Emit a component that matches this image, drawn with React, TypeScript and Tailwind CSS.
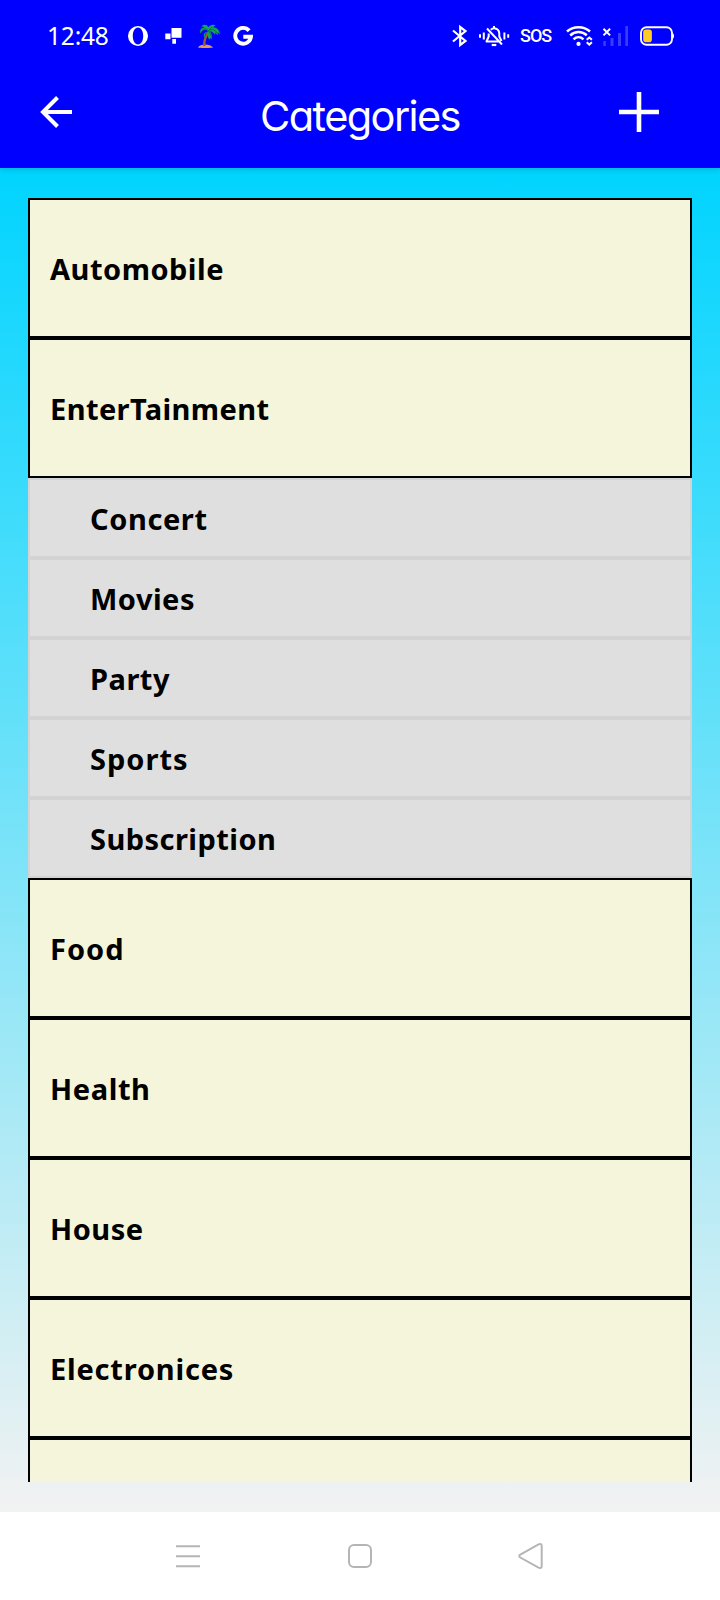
import React from "react";

type Row = { label: string; spacing: string };

const top: Row[] = [
  { label: "Automobile", spacing: "tracking-[0.5px]" },
  { label: "EnterTainment", spacing: "tracking-[0.4px]" },
];
const subs: Row[] = [
  { label: "Concert", spacing: "tracking-[0.6px]" },
  { label: "Movies", spacing: "tracking-[0.5px]" },
  { label: "Party", spacing: "tracking-[0.5px]" },
  { label: "Sports", spacing: "tracking-[1px]" },
  { label: "Subscription", spacing: "tracking-[0.45px]" },
];
const rest: Row[] = [
  { label: "Food", spacing: "tracking-[1px]" },
  { label: "Health", spacing: "tracking-[0.6px]" },
  { label: "House", spacing: "tracking-[0.5px]" },
  { label: "Electronices", spacing: "tracking-[0.8px]" },
  { label: "", spacing: "tracking-[0px]" },
];

function Category({ label, spacing }: Row) {
  return (
    <div className="flex h-[140px] shrink-0 items-center border-2 border-black bg-[#f5f5dc] pt-0.5 pl-5">
      <span className={`text-[29px] leading-10 font-bold text-black ${spacing}`}>{label}</span>
    </div>
  );
}

function SubCategory({ label, spacing }: Row) {
  return (
    <div className="flex h-20 shrink-0 items-center border-2 border-[#d3d3d3] bg-[#dfdfdf] pt-0.5 pl-[60px]">
      <span className={`text-[29px] leading-10 font-bold text-black ${spacing}`}>{label}</span>
    </div>
  );
}

function StatusBar() {
  return (
    <div className="flex h-6 items-center pr-[44px] pl-[47px] text-white">
      <span className="w-[81px] font-['Noto_Sans'] text-[24.5px] leading-6 tracking-[-0.2px]">12:48</span>
      <svg className="h-6 w-5" viewBox="128 24 20 24">
        <path fill="#fff" fillRule="evenodd" d="M138 26a10 10 0 1 0 0 20a10 10 0 1 0 0-20ZM138 27.600c3.200 0 5.200 3.700 5.200 8.400s-2 8.400-5.200 8.400s-5.200-3.700-5.200-8.400s2-8.400 5.200-8.400Z" />
      </svg>
      <svg className="ml-[17px] h-6 w-[17px]" viewBox="165 24 17 24" fill="#fff">
        <path d="M171.500 28h10v9.700h-10zM165.300 33.600h5.200v5.600h-5.200zM172.300 39h3.700v4.800h-3.700z" />
      </svg>
      <svg className="ml-4 h-6 w-[22px]" viewBox="198 24 22 24">
        <path fill="#e39a52" d="M198 47.500c1.500-4 12.500-4 15 0c-3 .7-12 .7-15 0Z" />
        <path fill="none" stroke="#9a593e" strokeWidth="2.400" d="M204.200 46c0-5 1.200-10 4.500-14" />
        <path fill="#12a35a" d="M208.500 31.500c-3-3-6.500-2-8.200 2.200c-.8-4 1-6.400 4.200-6.300c-.9-.9-2-1.100-3.100-.9c2.200-2.500 5.400-2 7 .7c1.600-2.300 5-3.600 7.400-1.200c-1.200 0-2 .4-2.600 1.200c3.600 0 6.400 2.900 6.700 7.300l-2.300-2.300l.1 3.200l-2.500-2.900l.1 2.600c-1.600-2-3.600-3.800-5.600-4c1.700 2.200 3 5 1.500 8.300l-1-1.700l-1 2c-1.600-2.600-1.900-5.300-.7-8.200c-2.400.7-3.800 2.600-3.900 6c-2.200-2.700-.3-5.600 3.900-6Z" />
        <path fill="none" stroke="#0a743f" strokeWidth=".9" d="M202 29.500c3-1.500 5-.5 6.500 1.500c2-2.600 6.300-1.600 8.700 2M208.500 31l3.500 6M208.500 31l3.500-4" />
      </svg>
      <svg className="ml-[13px] h-6 w-5" viewBox="233 24 20 24">
        <path fill="none" stroke="#fff" strokeWidth="3.900" d="M249.100 30.600A7.900 7.900 0 1 0 251 36.800H243.300" />
      </svg>
      <div className="flex-1" />
      <svg className="h-6 w-4" viewBox="452 24 16 24">
        <path fill="none" stroke="#fff" strokeWidth="2.200" d="M453 30.500L465.500 41L460.200 45V27L465.500 31L453 41.500" />
      </svg>
      <svg className="ml-[10px] h-6 w-8" viewBox="478 24 32 24" fill="none" stroke="#fff">
        <path strokeWidth="2" d="M480 34.200v3.600M483.800 32.400v7.200M504.400 32.400v7.200M508.200 34.200v3.600" />
        <path strokeWidth="2" strokeLinejoin="round" d="M487 28.500L502 44.500M488.700 33.500V36.500L486.500 41.500H498.500M490.800 29.700C493.500 27.300 499.300 28 499.300 34V36.500L501.500 41M494 26v2.200" />
        <path strokeWidth="2.200" d="M491.700 45h4.600" />
      </svg>
      <span className="ml-[10px] w-8 font-['Roboto'] text-[18px] leading-6 font-medium tracking-[-1px]">SOS</span>
      <svg className="ml-[14px] h-6 w-7" viewBox="566 24 28 24">
        <g fill="none" stroke="#fff" strokeWidth="2.500">
          <path d="M567 31.500C573 25.700 584 25.700 590 31.500M570.200 35.500C575 31 582 31 586.800 35.300M573.500 39.300C576.500 36.500 580.500 36.500 583.500 39.300" />
        </g>
        <circle cx="578.500" cy="43.900" r="2.100" fill="#fff" />
        <path fill="none" stroke="#fff" strokeWidth="2" d="M586.700 39.800L589.300 37.500L591.900 39.800M586.700 42.300L589.300 44.600L591.900 42.300" />
      </svg>
      <svg className="ml-[9px] h-6 w-[26px]" viewBox="603 24 26 24">
        <path fill="#3b3bff" d="M603.300 41h2.500v5h-2.500zM610.500 38h3v8h-3zM618 33h3v13h-3zM625.300 26h2.700v20h-2.700z" />
        <path fill="none" stroke="#fff" strokeWidth="2" d="M603.500 28.800l6.600 6.600M610.100 28.800l-6.600 6.600" />
      </svg>
      <svg className="ml-[11px] h-6 w-9" viewBox="640 24 36 24">
        <rect x="641" y="27.200" width="31" height="17.600" rx="5.500" fill="none" stroke="#fff" strokeWidth="1.900" />
        <rect x="643.200" y="29.600" width="8.700" height="12.600" rx="2.800" fill="#fc2" />
        <path fill="#fff" d="M672.500 33c2 1 2 5 0 6z" />
      </svg>
    </div>
  );
}

export default function App() {
  return (
    <div className="flex h-[1600px] w-[720px] flex-col overflow-hidden bg-white font-['Noto_Sans',sans-serif]">
      <header className="z-10 flex h-[168px] shrink-0 flex-col bg-[#0000ff] pt-6 shadow-[0_1px_6px_rgba(0,0,0,0.18)]">
        <StatusBar />
        <div className="flex h-32 items-start pr-[61px] pl-10 text-white">
          <svg className="mt-12 h-8 w-8 shrink-0" viewBox="40 96 32 32">
            <path fill="none" stroke="#fff" strokeWidth="4" d="M72 112H43M57.500 97.500L43 112L57.500 126.500" />
          </svg>
          <h1 className="mt-[43px] ml-[29px] flex-1 text-center font-['Inter'] text-[41.5px] leading-[50px] font-normal tracking-[-1.600px] [font-feature-settings:'cv11']">Categories</h1>
          <svg className="mt-11 h-10 w-10 shrink-0" viewBox="0 0 40 40">
            <path stroke="#fff" strokeWidth="4.600" d="M0 20h40M20 0v40" />
          </svg>
        </div>
      </header>
      <main className="flex h-[1344px] shrink-0 flex-col bg-linear-to-b/srgb from-[#00d4ff] to-[#f2f2f2] px-7 py-[30px]">
        <div className="flex h-[1284px] flex-col overflow-hidden">
          {top.map((row) => (
            <Category key={row.label} {...row} />
          ))}
          {subs.map((row) => (
            <SubCategory key={row.label} {...row} />
          ))}
          {rest.map((row) => (
            <Category key={row.label} {...row} />
          ))}
        </div>
      </main>
      <nav className="flex h-[88px] shrink-0 items-center justify-center gap-36 bg-white text-[#b5b5b5]">
        <svg className="h-7 w-7" viewBox="0 0 28 28" fill="none" stroke="currentColor" strokeWidth="2">
          <path d="M2 4.300h24M2 14.300h24M2 24.300h24" />
        </svg>
        <svg className="h-7 w-7" viewBox="0 0 28 28" fill="none" stroke="currentColor" strokeWidth="2">
          <rect x="3" y="3" width="22" height="22" rx="5" />
        </svg>
        <svg className="h-7 w-7" viewBox="0 0 28 28" fill="none" stroke="currentColor" strokeWidth="2">
          <path d="M2.300 12.700L20.500 2.400Q23.700 1.200 23.700 4V24Q23.700 26.800 20.500 25.600L2.300 15.500Q0.200 14 2.300 12.700Z" />
        </svg>
      </nav>
    </div>
  );
}
